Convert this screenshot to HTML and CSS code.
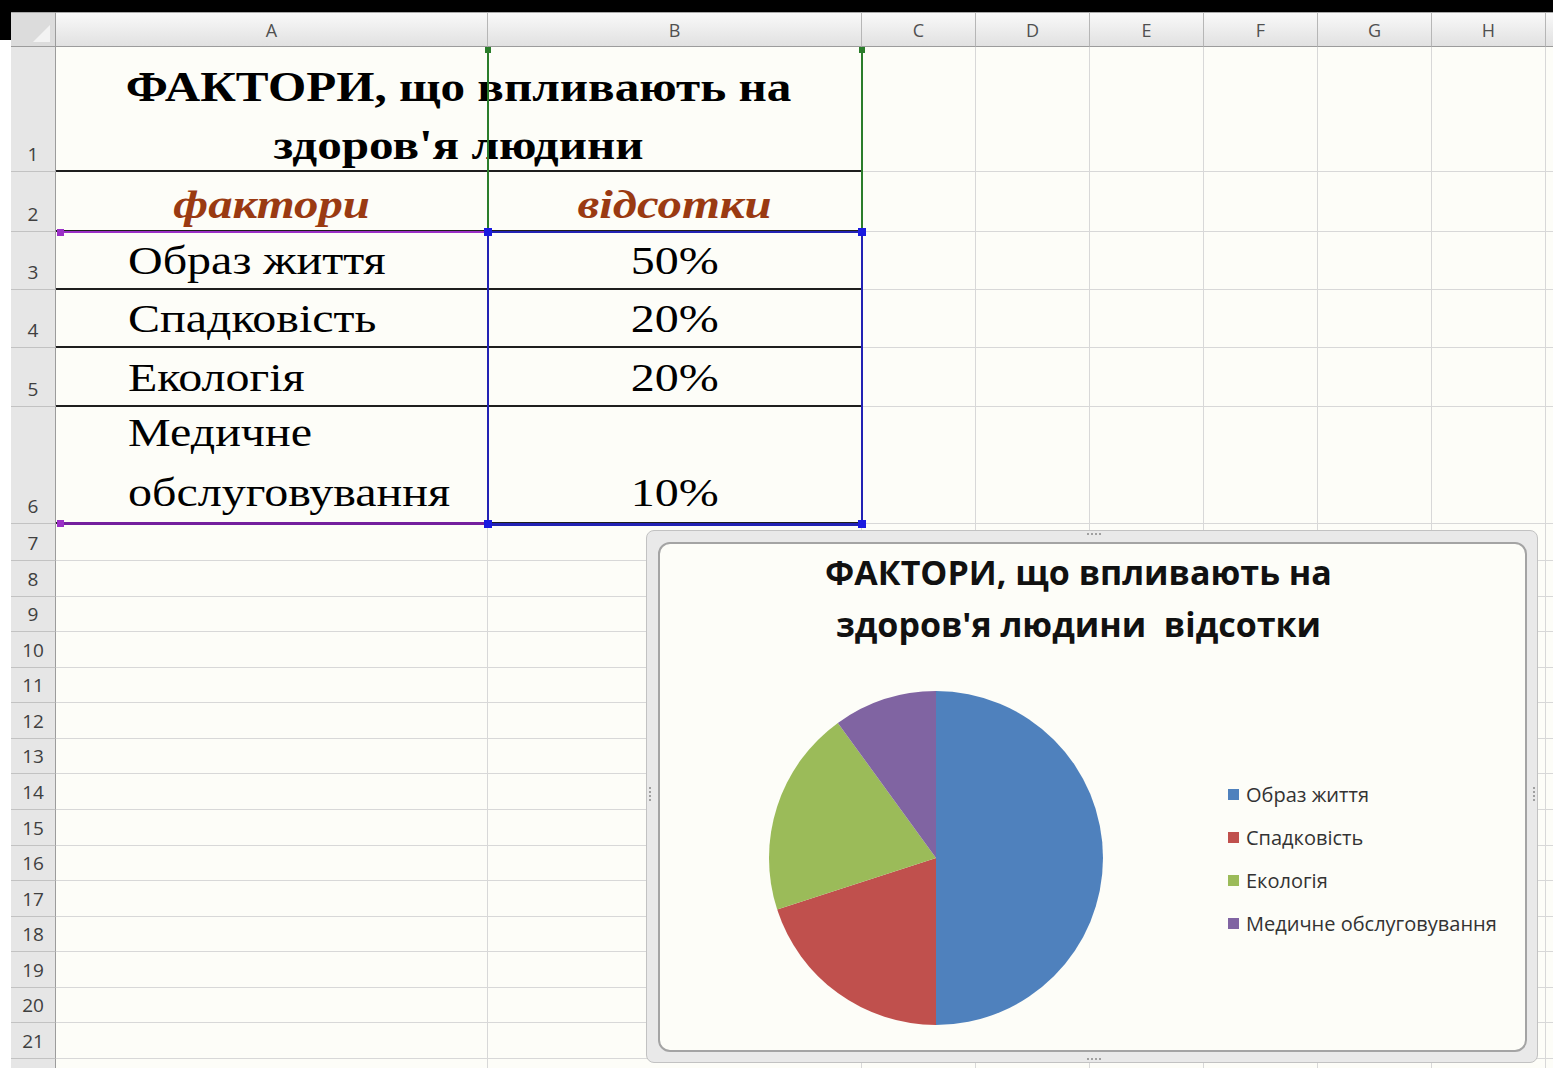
FILE: index.html
```html
<!DOCTYPE html>
<html lang="uk">
<head>
<meta charset="utf-8">
<title>Фактори здоров'я</title>
<link rel="stylesheet" href="styles.css">
</head>
<body>
<div class="topbar"></div>
<div class="main">
  <div class="gutter"><div class="gutter-block"></div></div>
  <div class="sheet">
    <div class="grid">
      <div class="corner"></div>
      <div class="ch">A</div><div class="ch">B</div><div class="ch">C</div><div class="ch">D</div><div class="ch">E</div><div class="ch">F</div><div class="ch">G</div><div class="ch">H</div><div class="ch"></div>

      <div class="rh">1</div>
      <div class="c d title"><span>ФАКТОРИ, що впливають на<br>здоров'я людини</span></div>
      <div class="c"></div><div class="c"></div><div class="c"></div><div class="c"></div><div class="c"></div><div class="c"></div><div class="c"></div>

      <div class="rh">2</div>
      <div class="c d head"><span>фактори</span></div>
      <div class="c d head"><span>відсотки</span></div>
      <div class="c"></div><div class="c"></div><div class="c"></div><div class="c"></div><div class="c"></div><div class="c"></div><div class="c"></div>

      <div class="rh">3</div>
      <div class="c d name"><span>Образ життя</span></div>
      <div class="c d pct"><span>50%</span></div>
      <div class="c"></div><div class="c"></div><div class="c"></div><div class="c"></div><div class="c"></div><div class="c"></div><div class="c"></div>

      <div class="rh">4</div>
      <div class="c d name"><span>Спадковість</span></div>
      <div class="c d pct"><span>20%</span></div>
      <div class="c"></div><div class="c"></div><div class="c"></div><div class="c"></div><div class="c"></div><div class="c"></div><div class="c"></div>

      <div class="rh">5</div>
      <div class="c d name"><span>Екологія</span></div>
      <div class="c d pct"><span>20%</span></div>
      <div class="c"></div><div class="c"></div><div class="c"></div><div class="c"></div><div class="c"></div><div class="c"></div><div class="c"></div>

      <div class="rh">6</div>
      <div class="c d name last"><span>Медичне<br>обслуговування</span></div>
      <div class="c d pct last"><span>10%</span></div>
      <div class="c"></div><div class="c"></div><div class="c"></div><div class="c"></div><div class="c"></div><div class="c"></div><div class="c"></div>

      <div class="rh">7</div><div class="c"></div><div class="c"></div><div class="c"></div><div class="c"></div><div class="c"></div><div class="c"></div><div class="c"></div><div class="c"></div><div class="c"></div>
      <div class="rh">8</div><div class="c"></div><div class="c"></div><div class="c"></div><div class="c"></div><div class="c"></div><div class="c"></div><div class="c"></div><div class="c"></div><div class="c"></div>
      <div class="rh">9</div><div class="c"></div><div class="c"></div><div class="c"></div><div class="c"></div><div class="c"></div><div class="c"></div><div class="c"></div><div class="c"></div><div class="c"></div>
      <div class="rh">10</div><div class="c"></div><div class="c"></div><div class="c"></div><div class="c"></div><div class="c"></div><div class="c"></div><div class="c"></div><div class="c"></div><div class="c"></div>
      <div class="rh">11</div><div class="c"></div><div class="c"></div><div class="c"></div><div class="c"></div><div class="c"></div><div class="c"></div><div class="c"></div><div class="c"></div><div class="c"></div>
      <div class="rh">12</div><div class="c"></div><div class="c"></div><div class="c"></div><div class="c"></div><div class="c"></div><div class="c"></div><div class="c"></div><div class="c"></div><div class="c"></div>
      <div class="rh">13</div><div class="c"></div><div class="c"></div><div class="c"></div><div class="c"></div><div class="c"></div><div class="c"></div><div class="c"></div><div class="c"></div><div class="c"></div>
      <div class="rh">14</div><div class="c"></div><div class="c"></div><div class="c"></div><div class="c"></div><div class="c"></div><div class="c"></div><div class="c"></div><div class="c"></div><div class="c"></div>
      <div class="rh">15</div><div class="c"></div><div class="c"></div><div class="c"></div><div class="c"></div><div class="c"></div><div class="c"></div><div class="c"></div><div class="c"></div><div class="c"></div>
      <div class="rh">16</div><div class="c"></div><div class="c"></div><div class="c"></div><div class="c"></div><div class="c"></div><div class="c"></div><div class="c"></div><div class="c"></div><div class="c"></div>
      <div class="rh">17</div><div class="c"></div><div class="c"></div><div class="c"></div><div class="c"></div><div class="c"></div><div class="c"></div><div class="c"></div><div class="c"></div><div class="c"></div>
      <div class="rh">18</div><div class="c"></div><div class="c"></div><div class="c"></div><div class="c"></div><div class="c"></div><div class="c"></div><div class="c"></div><div class="c"></div><div class="c"></div>
      <div class="rh">19</div><div class="c"></div><div class="c"></div><div class="c"></div><div class="c"></div><div class="c"></div><div class="c"></div><div class="c"></div><div class="c"></div><div class="c"></div>
      <div class="rh">20</div><div class="c"></div><div class="c"></div><div class="c"></div><div class="c"></div><div class="c"></div><div class="c"></div><div class="c"></div><div class="c"></div><div class="c"></div>
      <div class="rh">21</div><div class="c"></div><div class="c"></div><div class="c"></div><div class="c"></div><div class="c"></div><div class="c"></div><div class="c"></div><div class="c"></div><div class="c"></div>
      <div class="rh"></div><div class="c"></div><div class="c"></div><div class="c"></div><div class="c"></div><div class="c"></div><div class="c"></div><div class="c"></div><div class="c"></div><div class="c"></div>
    </div>

    <!-- range highlights for the chart's source data -->
    <div class="rf rf-green rf-g1"></div>
    <div class="rf rf-green rf-g2"></div>
    <div class="rf-dot dot-green dg1"></div>
    <div class="rf-dot dot-green dg2"></div>
    <div class="rf rf-purple rf-p1"></div>
    <div class="rf rf-purple rf-p2"></div>
    <div class="rf-dot dot-purple dp1"></div>
    <div class="rf-dot dot-purple dp2"></div>
    <div class="rf-blue"></div>
    <div class="rf-dot dot-blue db1"></div>
    <div class="rf-dot dot-blue db2"></div>
    <div class="rf-dot dot-blue db3"></div>
    <div class="rf-dot dot-blue db4"></div>

    <!-- embedded pie chart -->
    <div class="chart">
      <span class="grip grip-top"></span>
      <span class="grip grip-bottom"></span>
      <span class="grip grip-left"></span>
      <span class="grip grip-right"></span>
      <div class="chart-inner">
        <div class="chart-title">ФАКТОРИ, що впливають на<br>здоров'я людини&nbsp; відсотки</div>
        <div class="chart-body">
          <svg class="pie" width="340" height="340" viewBox="-170 -170 340 340">
            <path d="M0 0 L0 -167 A167 167 0 0 1 0 167 Z" fill="#4f81bd"/>
            <path d="M0 0 L0 167 A167 167 0 0 1 -158.83 51.61 Z" fill="#c0504d"/>
            <path d="M0 0 L-158.83 51.61 A167 167 0 0 1 -98.16 -135.11 Z" fill="#9bbb59"/>
            <path d="M0 0 L-98.16 -135.11 A167 167 0 0 1 0 -167 Z" fill="#8064a2"/>
          </svg>
          <ul class="legend">
            <li><i class="sw sw-blue"></i>Образ життя</li>
            <li><i class="sw sw-red"></i>Спадковість</li>
            <li><i class="sw sw-green"></i>Екологія</li>
            <li><i class="sw sw-purple"></i>Медичне обслуговування</li>
          </ul>
        </div>
      </div>
    </div>
  </div>
</div>
</body>
</html>
```
FILE: styles.css
```css
* { box-sizing: border-box; }

html, body {
  margin: 0;
  padding: 0;
}

body {
  width: 1553px;
  height: 1068px;
  overflow: hidden;
  background: #ffffff;
  font-family: "Open Sans", "Liberation Sans", sans-serif;
}

.topbar {
  height: 12px;
  background: #000;
}

.main {
  display: flex;
}

.gutter {
  flex: none;
  width: 11px;
  background: #fff;
}

.gutter-block {
  height: 28px;
  background: #000;
}

.sheet {
  position: relative;
  flex: none;
}

/* worksheet grid */
.grid {
  display: grid;
  grid-template-columns: 45px 432px 374px repeat(7, 114px);
  grid-template-rows: 35px 125px 60px 58px 58px 59px 117px 37px;
  grid-auto-rows: 35.57px;
  background: #fdfdf8;
}

.corner {
  position: relative;
  background: #dcdcdc;
  border-right: 1px solid #9c9c9c;
  border-bottom: 1px solid #9c9c9c;
  border-top: 1px solid #a8a8a8;
}

.corner::after {
  content: "";
  position: absolute;
  right: 5px;
  bottom: 4px;
  width: 0;
  height: 0;
  border-left: 17px solid transparent;
  border-bottom: 17px solid #f3f3f3;
}

.ch {
  display: flex;
  align-items: center;
  justify-content: center;
  background: linear-gradient(#f9f9f9, #e1e1e1);
  border-top: 1px solid #a8a8a8;
  border-right: 1px solid #b6b6b6;
  border-bottom: 1px solid #9c9c9c;
  font-size: 18px;
  color: #505050;
}

.rh {
  display: flex;
  align-items: flex-end;
  justify-content: center;
  padding-bottom: 6px;
  background: #e6e6e6;
  border-right: 1px solid #9c9c9c;
  border-bottom: 1px solid #c2c2c2;
  font-size: 19px;
  line-height: 22px;
  color: #404040;
}

.c {
  border-right: 1px solid #d8d8d8;
  border-bottom: 1px solid #d8d8d8;
}

/* data table cells; the sheet font renders wide, so glyphs are stretched */
.d {
  display: flex;
  align-items: flex-end;
  font-family: "Liberation Serif", "Times New Roman", serif;
  color: #000;
  border-bottom: 2px solid #1e1e1e;
}

.d span {
  display: inline-block;
  margin-bottom: -3px;
  transform-origin: 50% 100%;
}

.title {
  grid-column: span 2;
  justify-content: center;
  text-align: center;
  font-size: 42px;
  font-weight: bold;
  line-height: 58px;
}

.title span {
  margin-bottom: -4px;
  transform: scaleX(1.17);
}

.head {
  justify-content: center;
  font-size: 40px;
  font-weight: bold;
  font-style: italic;
  line-height: 60px;
  color: #9a3a12;
}

.head span {
  margin-bottom: -5px;
  transform: scaleX(1.22);
}

.name {
  padding-left: 72px;
  font-size: 40px;
  line-height: 60px;
}

.name span {
  transform-origin: 0 100%;
  transform: scaleX(1.2);
}

.pct {
  justify-content: center;
  font-size: 40px;
  line-height: 60px;
}

.pct span {
  transform: scaleX(1.2);
}

.d.last span {
  margin-bottom: -1px;
}

/* range finder outlines */
.rf {
  position: absolute;
}

.rf-green { background: #2b7d2b; }

.rf-g1 { left: 476px; top: 35px; width: 2px; height: 185px; }
.rf-g2 { left: 850px; top: 35px; width: 2px; height: 185px; }

.rf-purple { background: #9a2fc6; }

.rf-p1 { left: 47px; top: 219px; width: 430px; height: 2px; }
.rf-p2 { left: 47px; top: 510px; width: 430px; height: 3px; background: #74209e; }

.rf-blue {
  position: absolute;
  left: 476px;
  top: 219px;
  width: 376px;
  height: 295px;
  border: 2px solid #2222b4;
  border-bottom-width: 3px;
}

.rf-dot {
  position: absolute;
  width: 7px;
  height: 7px;
}

.dot-green { background: #2b7d2b; width: 6px; height: 6px; }
.dot-purple { background: #9a2fc6; }
.dot-blue { background: #1a1ae0; width: 8px; height: 8px; }

.dg1 { left: 474px; top: 35px; }
.dg2 { left: 848px; top: 35px; }
.dp1 { left: 46px; top: 217px; }
.dp2 { left: 46px; top: 508px; }
.db1 { left: 473px; top: 216px; }
.db2 { left: 847px; top: 216px; }
.db3 { left: 473px; top: 508px; }
.db4 { left: 847px; top: 508px; }

/* chart object */
.chart {
  position: absolute;
  left: 635px;
  top: 518px;
  width: 892px;
  height: 533px;
  padding: 11px 10px 10px 11px;
  background: #e9e9e9;
  border: 1px solid #c2c2c2;
  border-radius: 8px;
}

.grip {
  position: absolute;
  border-color: #a0a0a0;
  border-style: dotted;
  border-width: 0;
}

.grip-top { left: 440px; top: 2px; width: 14px; border-top-width: 2px; }
.grip-bottom { left: 440px; bottom: 2px; width: 14px; border-top-width: 2px; }
.grip-left { left: 2px; top: 256px; height: 14px; border-left-width: 2px; }
.grip-right { right: 2px; top: 256px; height: 14px; border-left-width: 2px; }

.chart-inner {
  height: 100%;
  display: flex;
  flex-direction: column;
  background: #fdfdf8;
  border: 2px solid #a4a4a4;
  border-radius: 12px;
}

.chart-title {
  padding-top: 2px;
  padding-right: 28px;
  text-align: center;
  font-size: 34px;
  font-weight: bold;
  line-height: 52px;
  color: #111;
}

.chart-body {
  display: flex;
  align-items: center;
  margin-top: 38px;
  padding-left: 106px;
}

.pie {
  flex: none;
  display: block;
}

.legend {
  list-style: none;
  margin: 2px 0 0 122px;
  padding: 0;
}

.legend li {
  display: flex;
  align-items: center;
  height: 43px;
  font-size: 20px;
  color: #333;
}

.sw {
  width: 11px;
  height: 11px;
  margin-right: 7px;
  flex: none;
}

.sw-blue { background: #4f81bd; }
.sw-red { background: #c0504d; }
.sw-green { background: #9bbb59; }
.sw-purple { background: #8064a2; }
```
